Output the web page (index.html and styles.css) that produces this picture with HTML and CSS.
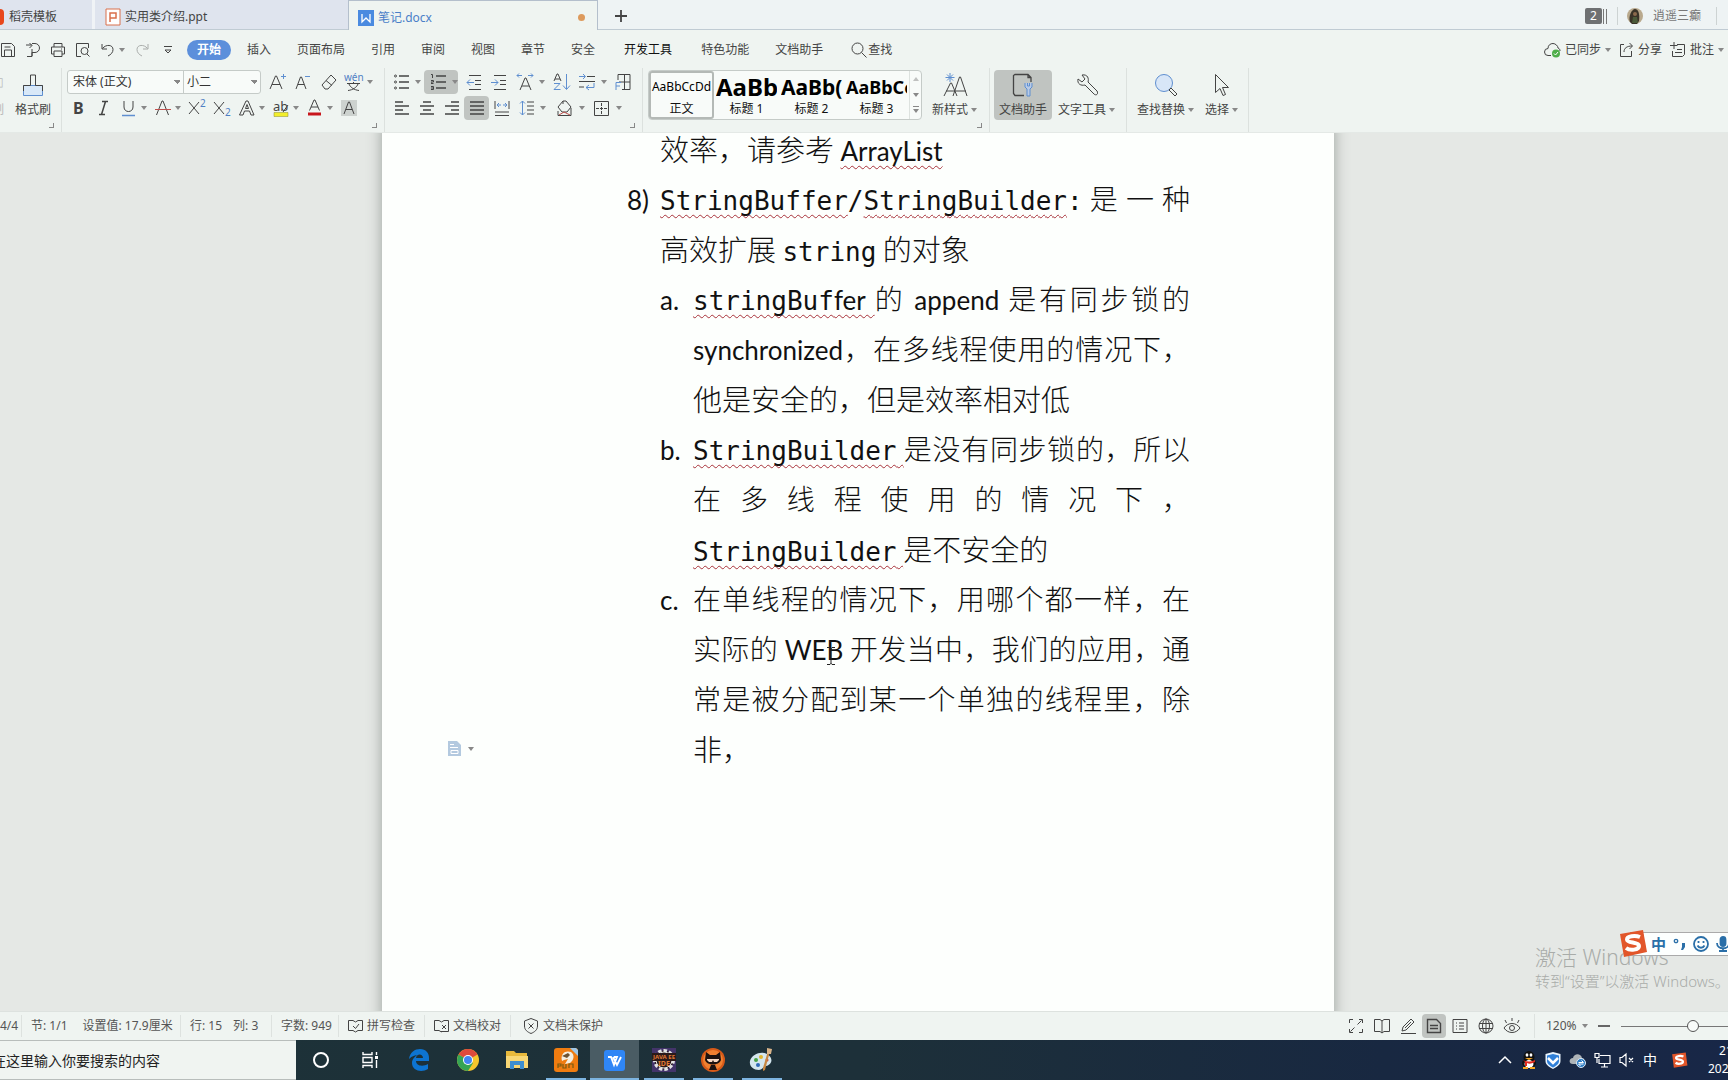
FILE: index.html
```html
<!DOCTYPE html>
<html lang="zh-CN">
<head>
<meta charset="utf-8">
<title>笔记.docx</title>
<link rel="stylesheet" href="styles.css">
</head>
<body>
<header class="titlebar">
  <div class="tab tab-home"><span class="flame"></span><span>稻壳模板</span></div>
  <div class="tab tab-ppt">
    <svg width="16" height="18" viewBox="0 0 16 18" fill="none" stroke="#d9704c"><path d="M1 1h14v16H1z" fill="#fff"/><path d="M5 14V5h6v5H5" stroke-width="1.500"/></svg>
    <span>实用类介绍.ppt</span>
  </div>
  <div class="tab tab-active">
    <svg width="16" height="18" viewBox="0 0 16 18"><path d="M0 1h16v16H0z" fill="#4a8ae0"/><path d="M4 5v8l4-4 4 4V5" fill="none" stroke="#fff" stroke-width="1.300"/></svg>
    <span>笔记.docx</span><i class="dot"></i>
  </div>
  <button class="newtab" aria-label="新建标签"><svg width="12" height="12" viewBox="0 0 12 12" stroke="#444" stroke-width="1.800"><path d="M6 0v12M0 6h12"/></svg></button>
  <div class="account">
    <span class="badge">2</span><i class="bars"></i><i class="vline"></i>
    <svg width="16" height="16" viewBox="0 0 16 16"><circle cx="8" cy="8" r="8" fill="#b9a98d"/><path d="M3 14C1 8 5 1 8 1s5 4 4 12l-2 3H5z" fill="#3a3328"/><circle cx="8" cy="6" r="2" fill="#8b6a4c"/><path d="M6 9h4l1 6H5z" fill="#4b5a3a"/></svg>
    <span class="user">逍遥三癫</span><i class="vline"></i>
  </div>
</header>

<nav class="menubar">
  <div class="quick">
    <button aria-label="保存"><svg width="16" height="16" viewBox="0 0 16 16"><path d="M1.500 1.500h10l3 3v10h-13zM4.500 14V8h7v6M4.500 5h6"/></svg></button>
    <button aria-label="输出"><svg width="16" height="16" viewBox="0 0 16 16"><path d="M1 3h6M4.500 1L7 3.500 4.500 6M7 1.500h3a4 4 0 010 9H7V14M2 14.500h5V7"/></svg></button>
    <button aria-label="打印"><svg width="16" height="16" viewBox="0 0 16 16"><path d="M4 5V1.500h8V5M4 12H1.500V5h13v7H12M4 9h8v5.500H4zM11 7h1"/></svg></button>
    <button aria-label="打印预览"><svg width="16" height="16" viewBox="0 0 16 16"><path d="M6 14.500H1.500v-13h12V6M14.500 14.500L12 12"/><circle cx="9.500" cy="9" r="3.500"/></svg></button>
    <button class="undo" aria-label="撤销"><svg width="14" height="16" viewBox="0 0 14 16"><path d="M1 2v5h5M1.500 6.500C5 2 12 2.500 12 7.500c0 3-2 5-5 6.500"/></svg><i class="caret"></i></button>
    <button aria-label="恢复" class="faint"><svg width="14" height="16" viewBox="0 0 14 16"><path d="M13 2v5H8M12.500 6.500C9 2 2 2.500 2 7.500c0 3 2 5 5 6.500"/></svg></button>
    <button aria-label="更多"><svg width="8" height="16" viewBox="0 0 8 16"><path d="M0 4.500h8M1 8l3 3 3-3z"/></svg></button>
  </div>
  <button class="pill">开始</button>
  <div class="menus">
    <button>插入</button><button>页面布局</button><button>引用</button><button>审阅</button><button>视图</button><button>章节</button><button>安全</button><button class="strong">开发工具</button><button>特色功能</button><button>文档助手</button>
    <button class="find"><svg width="16" height="16" viewBox="0 0 16 16"><circle cx="6.500" cy="6.500" r="5.500"/><path d="M10.500 10.500l5 5"/></svg>查找</button>
  </div>
  <div class="share">
    <button><svg width="17" height="16" viewBox="0 0 17 16"><path d="M7 13.500H4a3.500 3.500 0 010-7C4 3 6.500 1.500 9 1.500S14 4 14 6c1.500.500 2 1.500 2 3"/><circle cx="12" cy="11.500" r="4" fill="#4fae4a" stroke="none"/><path d="M10 11.500l1.500 1.500 2.500-3" stroke="#fff"/></svg>已同步<i class="caret"></i></button>
    <button><svg width="15" height="16" viewBox="0 0 15 16"><path d="M5 2.500H1.500v12h11V9M5 10c0-4 3-6 8-6M10.500 1L13.500 4l-3 3"/></svg>分享</button>
    <button><svg width="16" height="16" viewBox="0 0 16 16"><path d="M7 2.500h7.500v10l-2 2H2.500V9M4 0v7M0 3.500h7.500M7 7.500h5M5 10.500h7"/></svg>批注<i class="caret"></i></button>
  </div>
</nav>

<section class="ribbon">
  <div class="group g-brush">
    <div class="clipped"><span>▯</span><span>制</span></div>
    <button class="big"><svg width="22" height="24" viewBox="0 0 22 24"><path d="M1.500 12.500h19v10h-19z" fill="#d8e8f8" stroke="#5f8fd0"/><path d="M1.500 18v-5.500h7V2h5v10.500h7V18"/></svg><span>格式刷</span></button>
    <i class="corner"></i>
  </div>
  <div class="group g-font">
    <div class="row">
      <div class="combo">
        <select class="face" aria-label="字体"><option>宋体 (正文)</option></select>
        <select class="size" aria-label="字号"><option>小二</option></select>
      </div>
      <button class="tool" aria-label="增大字号"><svg width="18" height="18" viewBox="0 0 18 18"><path d="M1 16L6.500 3h1L13 16M3 11.500h8"/><path d="M12 3.500h5M14.500 1v5" class="b"/></svg></button>
      <button class="tool" aria-label="减小字号"><svg width="18" height="18" viewBox="0 0 18 18"><path d="M2 16L6.500 4h1L12 16M4 11.500h6"/><path d="M11 3.500h5" class="b"/></svg></button>
      <button class="tool" aria-label="清除格式"><svg width="18" height="18" viewBox="0 0 18 18"><path d="M12 2l5 5-8 9H6L3 12zM7 7.500l6 5"/></svg></button>
      <button class="tool drop" aria-label="拼音指南"><svg width="20" height="18" viewBox="0 0 20 18"><text x="0" y="8" class="t blue" font-size="10">wén</text><path d="M3 10.500h13M9.500 9v2M5 11c1 3 5 6 10 6.500M14 11c-1 3-5 6-10 6.500"/></svg><i class="caret"></i></button>
    </div>
    <div class="row row-format">
      <button class="tool" aria-label="加粗"><b>B</b></button>
      <button class="tool" aria-label="倾斜"><svg width="18" height="18" viewBox="0 0 18 18"><path d="M7 2.500h6M4 15.500h6M10.500 2.500l-4 13" stroke-width="1.500"/></svg></button>
      <button class="tool drop" aria-label="下划线"><svg width="18" height="18" viewBox="0 0 18 18"><path d="M4 2v6c0 6 9 6 9 0V2"/><path d="M2 16.500h13" class="b" stroke-width="1.500"/></svg><i class="caret"></i></button>
      <button class="tool drop" aria-label="删除线"><svg width="18" height="18" viewBox="0 0 18 18"><path d="M2.500 16L8 2h1l5.500 14"/><path d="M1 10.500h16" stroke="#c0504d"/></svg><i class="caret"></i></button>
      <button class="tool" aria-label="上标"><svg width="18" height="18" viewBox="0 0 18 18"><path d="M1 3l10 12M11 3L1 15"/><text x="12" y="8" class="t blue" font-size="10">2</text></svg></button>
      <button class="tool" aria-label="下标"><svg width="18" height="18" viewBox="0 0 18 18"><path d="M1 3l10 12M11 3L1 15"/><text x="12" y="17" class="t blue" font-size="10">2</text></svg></button>
      <button class="tool drop" aria-label="文字效果"><svg width="18" height="18" viewBox="0 0 18 18"><path d="M1.500 16L8 2h2l6 14h-3l-1.500-4h-5L5 16zM7.500 9.500h3L9 5.500z"/></svg><i class="caret"></i></button>
      <button class="tool drop" aria-label="突出显示"><svg width="18" height="18" viewBox="0 0 18 18"><path d="M2 13.500h14v4H2z" fill="#f2ee2c" stroke="#8a8a30" stroke-width=".5"/><text x="1" y="12" class="t" font-size="13">ab</text><path d="M11 13l5-7"/></svg><i class="caret"></i></button>
      <button class="tool drop" aria-label="字体颜色"><svg width="18" height="18" viewBox="0 0 18 18"><path d="M3.500 11.500L8 1h1l4.500 10.500M5 8h7"/><path d="M2 13.500h13v3H2z" fill="#c8161c" stroke="none"/></svg><i class="caret"></i></button>
      <button class="tool" aria-label="字符底纹"><svg width="18" height="18" viewBox="0 0 18 18"><path d="M1 1h16v16H1z" fill="#cdd2cf" stroke="none"/><path d="M4 15L8.500 3h1L14 15M6 10.500h6"/></svg></button>
    </div>
    <i class="corner"></i>
  </div>
  <div class="group g-para">
    <div class="row">
      <button class="tool drop" aria-label="项目符号"><svg width="16" height="18" viewBox="0 0 16 18"><path d="M5 3h10M5 9h10M5 15h10" stroke-width="1.400"/><circle cx="1.500" cy="3" r="1"/><circle cx="1.500" cy="9" r="1"/><circle cx="1.500" cy="15" r="1"/></svg><i class="caret"></i></button>
      <button class="tool drop on" aria-label="编号"><svg width="16" height="18" viewBox="0 0 16 18"><path d="M5 3h10M5 9h10M5 15h10" stroke-width="1.500"/><path d="M0 1.500h1.500V5M0 7.500h2.500V9H0v1.500h2.500M0 13.500h2.500v3H0M0 15h2"/></svg><i class="caret"></i></button>
      <button class="tool" aria-label="减少缩进"><svg width="16" height="18" viewBox="0 0 16 18"><path d="M3 2.500h12M9 7.500h6M9 11.500h6M3 16.500h12"/><path d="M8 9.500H1M4 6.500l-3 3 3 3" class="b"/></svg></button>
      <button class="tool" aria-label="增加缩进"><svg width="16" height="18" viewBox="0 0 16 18"><path d="M3 2.500h12M9 7.500h6M9 11.500h6M3 16.500h12"/><path d="M0 9.500h7M4 6.500l3 3-3 3" class="b"/></svg></button>
      <button class="tool drop" aria-label="字符缩放"><svg width="18" height="18" viewBox="0 0 18 18"><path d="M4 17L9 5h1l5 12M6 13h7"/><path d="M6 2.500H1M3 .500l-2 2 2 2M12 2.500h5M15 .500l2 2-2 2" class="b"/></svg><i class="caret"></i></button>
      <button class="tool" aria-label="排序"><svg width="18" height="18" viewBox="0 0 18 18"><path d="M1 8l3-7h1l3 7M2 6h5"/><path d="M1 10.500h6L1 16.500h6.500M13.500 1v15M10 12.500l3.500 4 3.500-4" class="b"/></svg></button>
      <button class="tool drop" aria-label="制表位"><svg width="18" height="18" viewBox="0 0 18 18"><path d="M9 3.500h8M1 8.500h16M1 14h5"/><path d="M1 3.500h6M5 1l2.500 2.500L5 6M16 10v4.500H8M11 12l-3 2.500 3 2.500" class="b"/></svg><i class="caret"></i></button>
      <button class="tool" aria-label="表格"><svg width="16" height="18" viewBox="0 0 16 18"><path d="M3 7V1.500h12v15H7M9.500 1.500v15M4 9h11"/><path d="M1 17V9.500h5M1 13h4" class="b"/></svg></button>
    </div>
    <div class="row">
      <button class="tool" aria-label="左对齐"><svg width="16" height="18" viewBox="0 0 16 18"><path d="M1 3h8M1 7h14M1 11h8M1 15h14" stroke-width="1.300"/></svg></button>
      <button class="tool" aria-label="居中"><svg width="16" height="18" viewBox="0 0 16 18"><path d="M4 3h8M1 7h14M4 11h8M1 15h14" stroke-width="1.300"/></svg></button>
      <button class="tool" aria-label="右对齐"><svg width="16" height="18" viewBox="0 0 16 18"><path d="M7 3h8M1 7h14M7 11h8M1 15h14" stroke-width="1.300"/></svg></button>
      <button class="tool on" aria-label="两端对齐"><svg width="16" height="18" viewBox="0 0 16 18"><path d="M1 3h14M1 7h14M1 11h14M1 15h14" stroke-width="1.500"/></svg></button>
      <button class="tool" aria-label="分散对齐"><svg width="16" height="18" viewBox="0 0 16 18"><path d="M1 2v8M15 2v8M1 13h14M1 16.500h14"/><path d="M3 6h4M5 4L3 6l2 2M13 6H9M11 4l2 2-2 2" class="b"/></svg></button>
      <button class="tool drop" aria-label="行距"><svg width="16" height="18" viewBox="0 0 16 18"><path d="M8 3h7M8 7h7M8 11h7M8 15h7"/><path d="M3.500 2v14M1 4.500L3.500 2 6 4.500M1 13.500L3.500 16 6 13.500" class="b"/></svg><i class="caret"></i></button>
      <button class="tool drop" aria-label="底纹颜色"><svg width="18" height="18" viewBox="0 0 18 18"><path d="M7 2h3l5 6-4 5H6L2 8zM7 2v3M2 12v4.500h13V9"/><path d="M3 16l5-3 6 3" stroke="#c0504d"/></svg><i class="caret"></i></button>
      <button class="tool drop" aria-label="边框"><svg width="18" height="18" viewBox="0 0 18 18"><path d="M1.500 2.500h14v14h-14z"/><path d="M8.500 4v11M3 9.500h11" stroke-dasharray="3 1"/></svg><i class="caret"></i></button>
    </div>
    <i class="corner"></i>
  </div>
  <div class="group g-style">
    <div class="gallery">
      <button class="style sel"><span class="s0">AaBbCcDd</span><em>正文</em></button>
      <button class="style"><span class="s1">AaBb</span><em>标题 1</em></button>
      <button class="style"><span class="s2">AaBb(</span><em>标题 2</em></button>
      <button class="style"><span class="s3">AaBbCc</span><em>标题 3</em></button>
      <div class="spin"><i class="caret up"></i><i class="caret"></i><i class="caret more"></i></div>
    </div>
    <button class="big"><svg width="26" height="24" viewBox="0 0 26 24"><path d="M2 23L8.500 10h1L15 23M4 18h20M11 23L17.500 4h1L25 23"/><path d="M8 0v9M3.500 4.500h9M5 1.500l6 6M11 1.500l-6 6" class="b"/></svg><span>新样式<i class="caret"></i></span></button>
    <i class="corner"></i>
  </div>
  <div class="group g-help">
    <button class="big on"><svg width="22" height="24" viewBox="0 0 22 24"><path d="M12 22.500H3l-1.500-2v-18L3 1.500h13l3 3V9M16 1.500v3h3" stroke-width="1.300"/><path d="M13 10v4l2 2v7h3v-7l2-2v-4M15.500 10v3h2v-3" stroke="#5f8fd0" fill="#b9cbe6"/></svg><span>文档助手</span></button>
    <button class="big"><svg width="22" height="24" viewBox="0 0 22 24"><path d="M6 2c6-1 7 4 6 7l9 9c2 3-1 5-3 3L9 12c-4 1-8-1-7-6l4 3 3-3z"/></svg><span>文字工具<i class="caret"></i></span></button>
  </div>
  <div class="group g-edit">
    <button class="big"><svg width="24" height="24" viewBox="0 0 24 24"><circle cx="10" cy="10" r="8.500" fill="#d8e6f7" stroke="#5f8fd0"/><path d="M15 17l2-2 6 6-2 2z"/></svg><span>查找替换<i class="caret"></i></span></button>
    <button class="big"><svg width="22" height="24" viewBox="0 0 22 24"><path d="M4.500 1.500v18l4.500-4 3 7 2.500-1-3-7h6z"/></svg><span>选择<i class="caret"></i></span></button>
  </div>
</section>

<main class="canvas">
  <article class="page">
    <p class="line l1">效率，请参考 <u class="cal">ArrayList</u></p>
    <p class="line l1 full"><span class="num">8)</span><u class="mono">StringBuffer</u><span class="mono">/</span><u class="mono">StringBuilder</u><span class="mono">:</span> 是 一 种</p>
    <p class="line l1">高效扩展 <span class="mono">string</span> 的对象</p>
    <p class="line l2 full"><span class="num">a.</span><u class="mono">stringBuf<span class="cal">fer </span></u>的 <span class="cal">append</span> 是有同步锁的</p>
    <p class="line l2 full"><span class="cal">synchronized</span>，在多线程使用的情况下，</p>
    <p class="line l2">他是安全的，但是效率相对低</p>
    <p class="line l2 full"><span class="num">b.</span><u class="mono">StringBuilder<span class="cal"> </span></u>是没有同步锁的，所以</p>
    <p class="line l2 full">在多线程使用的情况下，</p>
    <p class="line l2"><u class="mono">StringBuilder<span class="cal"> </span></u>是不安全的</p>
    <p class="line l2 full"><span class="num">c.</span>在单线程的情况下，用哪个都一样，在</p>
    <p class="line l2 full">实际的 <span class="cal web">WEB<svg class="ibeam" width="8" height="18" viewBox="0 0 8 18" fill="none" stroke="#222"><path d="M0 .500h3l1 1 1-1h3M4 1v16M0 17.500h3l1-1 1 1h3"/></svg></span> 开发当中，我们的应用，通</p>
    <p class="line l2 full">常是被分配到某一个单独的线程里，除</p>
    <p class="line l2">非，</p>
    <div class="marker"><svg width="13" height="15" viewBox="0 0 13 15"><path d="M0 0h9l4 4v11H0z" fill="#b3c9df"/><path d="M2 3.500h4M2 6.500h8M3 9.500h7v3H3z" stroke="#fff" fill="none"/></svg><i class="caret"></i></div>
  </article>
  <div class="watermark"><strong>激活 Windows</strong><span>转到“设置”以激活 Windows。</span></div>
  <div class="ime">
    <svg class="sogou" width="30" height="30" viewBox="0 0 30 30"><path d="M2 5L25 1l4 22-23 5z" fill="#e2562a"/><path d="M22 8c-5-2-13-1-13 2.500 0 4 12 2 12 6.500 0 4-9 5-13 2" fill="none" stroke="#fff" stroke-width="4"/></svg>
    <b>中</b>
    <svg width="13" height="14" viewBox="0 0 13 14"><circle cx="3" cy="4" r="1.700" fill="none" stroke="#2a6fa8" stroke-width="1.300"/><path d="M9 6h3v4l-2 3H8l1-3z" fill="#2a6fa8"/></svg>
    <svg width="16" height="16" viewBox="0 0 16 16" fill="none" stroke="#2a6fa8" stroke-width="1.800"><circle cx="8" cy="8" r="7"/><path d="M5.500 5v2M10.500 5v2M4.500 9.500c1.500 3 5.500 3 7 0"/></svg>
    <svg width="14" height="16" viewBox="0 0 14 16" fill="none" stroke="#2a6fa8" stroke-width="1.800"><path d="M1 7c0 7 12 7 12 0M7 12v4M3 15h8"/><rect x="4.500" y="1" width="5" height="9" rx="2.500" fill="#2a6fa8"/></svg>
  </div>
</main>

<footer class="status">
  <div class="cell c-page"><span>4/4</span></div>
  <div class="cell c-sec"><span>节: 1/1</span><span>设置值: 17.9厘米</span></div>
  <div class="cell c-row"><span>行: 15</span><span>列: 3</span></div>
  <div class="cell c-count"><span>字数: 949</span></div>
  <div class="cell"><button><svg width="15" height="14" viewBox="0 0 15 14"><path d="M5 1.500H.500v10H5l2.500 1.500 2.500-1.500h4.500v-10H10M5 1.500L7.500 3 10 1.500M5 7l2.500 2.500L11 5"/></svg>拼写检查</button></div>
  <div class="cell"><button><svg width="15" height="14" viewBox="0 0 15 14"><path d="M5 1.500H.500v10H5l2.500 1.500M5 1.500L7.500 3 10 1.500h4.500v11H7M8 6l4 4M12 6L8 10"/></svg>文档校对</button></div>
  <div class="cell last"><button><svg width="16" height="16" viewBox="0 0 16 16"><path d="M8 .500l6.500 2.500v5c0 4-3 6-6.500 7.500C4.500 14 1.500 12 1.500 8V3zM5.500 5.500l5 5M10.500 5.500l-5 5"/></svg>文档未保护</button></div>
  <div class="views">
    <button aria-label="全屏"><svg width="16" height="16" viewBox="0 0 16 16"><path d="M1.500 5V1.500H5M11 1.500h3.500V5M14.500 11v3.500H11M5 14.500H1.500V11M9.500 6.500l4-4M2.500 13.500l4-4"/></svg></button>
    <button aria-label="阅读"><svg width="16" height="16" viewBox="0 0 16 16"><path d="M8 3L6 1.500H.500v12H6L8 15l2-1.500h5.500v-12H10zv12"/></svg></button>
    <button aria-label="写作"><svg width="16" height="16" viewBox="0 0 16 16"><path d="M1 15.500h15M2 13l1-4 8-8 3 3-8 8zM5 10l6-6"/></svg></button>
    <button aria-label="页面视图" class="on"><svg width="16" height="16" viewBox="0 0 16 16"><path d="M1.500 1.500h9l4 4v9h-13zM4 7.500h8M4 10.500h8" stroke-width="1.400"/></svg></button>
    <button aria-label="大纲"><svg width="16" height="16" viewBox="0 0 16 16"><path d="M1 1.500h14v13H1zM4 5h1M7 5h5M4 8h1M7 8h5M7 11h5M4 11h1"/></svg></button>
    <button aria-label="网页视图"><svg width="16" height="16" viewBox="0 0 16 16"><circle cx="8" cy="8" r="7"/><ellipse cx="8" cy="8" rx="3.500" ry="7"/><path d="M1 5.500h14M1 10.500h14M8 1v14"/></svg></button>
    <button aria-label="护眼"><svg width="18" height="16" viewBox="0 0 18 16"><path d="M1 10c4-6 12-6 16 0-4 6-12 6-16 0zM9 3V0M3.500 5L2 2M14.500 5L16 2"/><circle cx="9" cy="10" r="2.500"/></svg></button>
  </div>
  <div class="zoom">
    <button class="pct">120%<i class="caret"></i></button>
    <button class="minus" aria-label="缩小"></button>
    <input type="range" min="0" max="172" value="120" aria-label="显示比例">
  </div>
</footer>

<footer class="taskbar">
  <input class="search" placeholder="在这里输入你要搜索的内容" aria-label="搜索">
  <div class="apps">
    <button aria-label="Cortana"><svg width="18" height="18" viewBox="0 0 18 18"><circle cx="9" cy="9" r="7" fill="none" stroke="#fff" stroke-width="2"/></svg></button>
    <button aria-label="任务视图"><svg width="18" height="18" viewBox="0 0 18 18" fill="none" stroke="#fff" stroke-width="1.400"><path d="M2 1v2.500h9V1M2 6.500h9v5H2zM2 17v-2.500h9V17M15.500 1v3M15.500 9v8"/><path d="M14 5h3v3h-3z" fill="#fff" stroke="none"/></svg></button>
    <button aria-label="Edge"><svg width="22" height="22" viewBox="0 0 22 22"><path d="M1 10C2 3 7 0 12 0c6 0 9 4 9 9v3H8c0 5 7 6 12 3v5c-6 4-16 2-16-6 0-4 3-7 6-8-3 0-6 1-9 4zm7-1h7c0-4-6-5-7 0z" fill="#0d74d1"/></svg></button>
    <button aria-label="Chrome"><svg width="22" height="22" viewBox="0 0 22 22"><circle cx="11" cy="11" r="11" fill="#f6c52c"/><path d="M11 11L1.500 5.500a11 11 0 0119 0z" fill="#de4a3c"/><path d="M11 11L1.500 5.500A11 11 0 0011 22l5-8z" fill="#35a455"/><circle cx="11" cy="11" r="5" fill="#fff"/><circle cx="11" cy="11" r="4" fill="#4285f4"/></svg></button>
    <button aria-label="文件资源管理器"><svg width="22" height="20" viewBox="0 0 22 20"><path d="M0 1h8l2 2h11v15H0z" fill="#e8b93c"/><path d="M0 6h22v12H0z" fill="#f8d775"/><path d="M4 19v-8h14v8h-4v-4H8v4z" fill="#3d8ed0"/></svg></button>
    <button class="run" aria-label="笔记工具"><svg width="24" height="24" viewBox="0 0 24 24"><rect width="24" height="24" rx="3" fill="#f07c10"/><path d="M16 0h6l2 2v6z" fill="#9fc7e6"/><path d="M8 13C6 5 12 2 17 4c4 3 3 8-1 11l-5 1 3-5-4 1z" fill="#f4eee0"/><path d="M8 8l6-3 2 2-3 3z" fill="#6d5232"/><path d="M4 20v-4h3v2H4M9 16v4h3v-4M15 20v-4h4v4" stroke="#7a5a10" stroke-width="1.200" fill="none"/></svg></button>
    <button class="run current" aria-label="WPS"><svg width="21" height="21" viewBox="0 0 21 21"><rect width="21" height="21" rx="3" fill="#2f86f6"/><path d="M4 7h3l3 8 3-8h-3M9 7l4 8 4-8" fill="none" stroke="#fff" stroke-width="1.800"/></svg></button>
    <button class="run" aria-label="Java EE IDE"><svg width="24" height="24" viewBox="0 0 24 24"><path d="M0 0h24v24H0z" fill="#43346a"/><circle cx="12" cy="12" r="9.500" fill="#2b1a1a" stroke="#e4e4e4" stroke-width="3" stroke-dasharray="3.500 2"/><circle cx="12" cy="12" r="8" fill="#2b1a1a" stroke="#e4e4e4"/><path d="M0 5h24v8H0z" fill="#2b1a1a"/><text x="12" y="11" text-anchor="middle" font-size="6" font-weight="700" fill="#e07a34">JAVA EE</text><text x="12" y="18" text-anchor="middle" font-size="7" font-weight="700" fill="#e07a34">IDE</text></svg></button>
    <button class="run" aria-label="黑猫"><svg width="24" height="24" viewBox="0 0 24 24"><circle cx="12" cy="12" r="12" fill="#d85a18"/><circle cx="12" cy="12" r="10" fill="#f08030"/><path d="M5 4l4 3h6l4-3 1 8c-2 6-14 6-16 0zM10 17h4l2 5H8z" fill="#1c1210"/><path d="M6 11h12v1l-2 2h-3l-1-2-1 2H8l-2-2z" fill="#f6d9c4"/></svg></button>
    <button class="run" aria-label="画图"><svg width="26" height="24" viewBox="0 0 26 24"><path d="M1 13C3 6 12 3 18 6c7 4 5 11-1 12-3 0-3 4-7 4-6 0-10-4-9-9z" fill="#d4e6ee"/><circle cx="7" cy="12" r="2" fill="#47a244"/><circle cx="12" cy="9" r="2" fill="#e0b62e"/><circle cx="9" cy="17" r="2" fill="#2f69b8"/><circle cx="18" cy="12" r="1.500" fill="#d23c30"/><path d="M21 3l-5 19-2 1 0-3 5-17z" fill="#c68642"/><path d="M18 0l5 1-1 5h-4z" fill="#d9b48a"/></svg></button>
  </div>
  <div class="tray">
    <svg width="16" height="16" viewBox="0 0 16 16" fill="none" stroke="#fff" stroke-width="1.500"><path d="M2 11l6-6 6 6"/></svg>
    <svg width="16" height="18" viewBox="0 0 16 18"><ellipse cx="8" cy="6" rx="5.500" ry="6" fill="#111"/><ellipse cx="8" cy="12" rx="7" ry="5" fill="#111"/><ellipse cx="8" cy="13" rx="4.500" ry="4" fill="#fff"/><ellipse cx="6" cy="4" rx="1.400" ry="1.800" fill="#fff"/><ellipse cx="10" cy="4" rx="1.400" ry="1.800" fill="#fff"/><path d="M4 7h8l-4 2z" fill="#f5a623"/><path d="M2 9c4 2 8 2 12 0v2c-4 2-6 2-8 1v3H4v-4z" fill="#e22b20"/><path d="M2 16h5v2H2zM9 16h5v2H9z" fill="#f5a623"/></svg>
    <svg width="16" height="17" viewBox="0 0 16 17"><path d="M8 0l7.500 2v7c0 4-4 6-7.500 8C4.500 15 .500 13 .500 9V2z" fill="#e9f3fc"/><path d="M8 2l6 1.500V9c0 3-3 5-6 6.500C5 14 2 12 2 9V3.500z" fill="#2f7fd8"/><path d="M3 6l5 5 5-5" fill="none" stroke="#fff" stroke-width="2.500"/></svg>
    <svg width="17" height="16" viewBox="0 0 17 16"><path d="M4 12C-1 12 0 6 4 6c1-5 8-5 9 0 3 0 4 6 0 6z" fill="#aeb4b8"/><circle cx="12" cy="11" r="4.500" fill="#2d7cc4" stroke="#dce9f5"/><path d="M9.500 10.500h5l-2-2M14.500 12h-5l2 2" stroke="#fff" fill="none"/></svg>
    <svg width="17" height="16" viewBox="0 0 17 16" fill="none" stroke="#fff" stroke-width="1.200"><path d="M6 3.500h10v8H5V7M10.500 12v3M7 15h7M1 1.500h4v4H1zM3 6v5"/></svg>
    <svg width="16" height="16" viewBox="0 0 16 16" fill="none" stroke="#fff" stroke-width="1.200"><path d="M1 5.500h2l4-3.500v12l-4-3.500H1zM10 6l4 4M14 6l-4 4"/></svg>
    <span class="lang">中</span>
    <svg width="17" height="17" viewBox="0 0 30 30"><path d="M2 4L26 1l3 23-24 4z" fill="#e2562a"/><path d="M22 8c-5-2-13-1-13 2.500 0 4 12 2 12 6.500 0 4-9 5-13 2" fill="none" stroke="#fff" stroke-width="4"/></svg>
  </div>
  <div class="clock"><span class="time">21</span><span>202</span></div>
</footer>
</body>
</html>
```
FILE: styles.css
```css
* { box-sizing: border-box; }
body {
  margin: 0;
  height: 100vh;
  display: flex;
  flex-direction: column;
  overflow: hidden;
  background: #eff4f1;
  color: #444;
  font: 12px/16px "Noto Sans", "Noto Sans CJK SC", sans-serif;
  white-space: nowrap;
}
button {
  margin: 0;
  padding: 0;
  border: 0;
  background: none;
  color: inherit;
  font: inherit;
  display: flex;
  align-items: center;
}
svg { flex: none; display: block; }
i { flex: none; display: block; }
.menubar svg, .ribbon svg, .status svg { fill: none; stroke: #444; }
.ribbon .b { stroke: #5f8fd0; }
.ribbon .t { fill: #444; stroke: none; }
.ribbon .t.blue { fill: #4f80c4; }
.caret {
  border: 3px solid transparent;
  border-top: 4px solid #888;
  border-bottom: 0;
  width: 6px;
  height: 4px;
}
.on { background: #c0c4c1; border-radius: 4px; }

/* Title bar */
.titlebar {
  height: 30px;
  flex: none;
  display: flex;
  background: #eef3f4;
  border-bottom: 1px solid #c0cbd3;
}
.tab {
  height: 29px;
  display: flex;
  align-items: center;
  gap: 4px;
  padding-top: 4px;
  background: #dfe4ee;
}
.tab-home { width: 95px; gap: 5px; border-right: 3px solid #f0f3f6; }
.flame { width: 4px; height: 16px; background: #e8471c; border-radius: 0 8px 8px 0; }
.tab-ppt { width: 253px; padding-left: 10px; }
.tab-active {
  width: 250px;
  height: 30px;
  padding-left: 9px;
  background: #eff4f1;
  border: 1px solid #b4bfcc;
  border-bottom: 0;
  color: #4a7fc8;
}
.dot { width: 7px; height: 7px; border-radius: 50%; background: #dd9a5c; margin: 0 12px 0 auto; }
.newtab { padding: 3px 17px 0; }
.account { margin-left: auto; display: flex; align-items: center; padding-right: 11px; color: #777; padding-top: 3px; }
.badge { width: 17px; background: #6e7072; color: #fff; text-align: center; border-radius: 2px; }
.bars { width: 4px; height: 15px; border: solid #777; border-width: 0 1px; margin-left: 1px; }
.vline { width: 1px; height: 18px; background: #cdd3d3; margin: 0 9px 0 10px; }
.user { margin-left: 10px; }
.account .vline:last-child { margin: 0 0 0 15px; }

/* Menu bar */
.menubar { height: 38px; flex: none; display: flex; align-items: center; padding-top: 1px; }
.quick { display: flex; align-items: center; gap: 9px; width: 187px; }
.quick .undo { gap: 4px; margin: 0 1px; }
.quick .faint { opacity: .4; margin-right: 6px; }
.pill { width: 44px; height: 20px; border-radius: 10px; background: #5c8fdb; color: #fff; font-weight: 700; justify-content: center; }
.menus { display: flex; gap: 26px; margin-left: 16px; }
.menus .strong { color: #111; margin: 0 3px; }
.find { gap: 1px; margin-left: 2px; }
.share { margin-left: auto; display: flex; gap: 8px; padding-right: 4px; }
.share button { gap: 4px; }

/* Ribbon */
.ribbon { height: 65px; flex: none; display: flex; align-items: stretch; border-bottom: 1px solid #e4e9e6; }
.group { position: relative; display: flex; border-right: 1px solid #dce1de; padding: 2px 0 12px; }
.corner { position: absolute; right: 7px; bottom: 4px; width: 5px; height: 5px; border: solid #888; border-width: 0 1px 1px 0; }
.big { flex-direction: column; justify-content: space-between; padding: 3px 5px 2px; }
.big span { display: flex; align-items: center; gap: 3px; }
.g-brush { width: 62px; }
.clipped { width: 4px; overflow: hidden; direction: rtl; color: #bbb; display: flex; flex-direction: column; justify-content: space-between; padding: 4px 0 2px; }
.g-brush .big { margin-left: 6px; }
.row { display: flex; align-items: center; height: 24px; }
.row + .row { margin-top: 2px; }
.g-font, .g-para { flex-direction: column; }
.g-font { width: 323px; padding-left: 5px; }
.row-format { padding-left: 3px; }
.combo { display: flex; width: 194px; height: 24px; border: 1px solid #c5cbc8; border-radius: 3px; background: #f8fbf9; margin-right: 8px; }
.combo select {
  appearance: none;
  border: 0;
  margin: 0;
  padding: 0 0 0 5px;
  color: #333;
  font: inherit;
  line-height: 22px;
  background: conic-gradient(from -45deg at 50% 100%, #888 90deg, transparent 0) right 3px center / 6px 4px no-repeat;
}
.face { width: 115px; }
.combo .size { width: 77px; border-left: 1px solid #c5cbc8; padding-left: 3px; }
.tool { width: 25px; height: 24px; }
.tool b { font-size: 16px; margin-left: 3px; }
.drop { width: 34px; gap: 3px; }
.g-para { width: 258px; padding-left: 9px; }
.g-para .drop { width: 37px; gap: 5px; }
.g-para .tool.on { margin-left: -5px; padding-left: 5px; width: 25px; margin-right: 5px; }
.g-para .drop.on { margin-left: -7px; padding-left: 7px; width: 34px; margin-right: 8px; }
.g-style { width: 347px; padding-left: 5px; }
.gallery { display: flex; width: 274px; height: 50px; border: 1px solid #c5cbc8; border-radius: 4px; background: #f8fbf9; color: #111; }
.style { width: 65px; flex-direction: column; justify-content: space-between; overflow: hidden; border: 2px solid transparent; }
.style.sel { border-color: #b4b9b6; border-radius: 3px; }
.style span { height: 28px; line-height: 28px; color: #000; }
.style em { font-style: normal; }
.s0 { font-size: 12px; }
.s1, .s2, .s3 { font-weight: 700; align-self: flex-start; }
.s1 { font-size: 24px; }
.s2 { font-size: 21px; }
.s3 { font-size: 18px; }
.spin { margin-left: auto; width: 12px; border-left: 1px solid #dde2df; display: flex; flex-direction: column; align-items: center; justify-content: space-around; }
.up { transform: rotate(180deg); opacity: .5; }
.more { position: relative; }
.more::before { content: ""; position: absolute; left: -3px; top: -7px; width: 6px; height: 1px; background: #888; }
.g-style .big { margin-left: 5px; }
.g-help { width: 137px; padding-left: 4px; gap: 1px; }
.g-edit { width: 122px; padding-left: 5px; gap: 1px; }

/* Document */
.canvas { flex: 1; min-height: 0; position: relative; overflow: hidden; background: #e5e8e5; display: flex; justify-content: center; }
.page {
  position: relative;
  width: 952px;
  margin: -10px 12px 0 0;
  padding: 0 144px 0 278px;
  min-height: 900px;
  background: #fdfffd;
  box-shadow: 0 0 14px #9aa09c;
  color: #111;
  font: 300 29px/50px "Noto Sans CJK SC", sans-serif;
}
.line { margin: 0; height: 50px; position: relative; }
.l2 { margin-left: 33px; }
.full { font-size: 28px; text-align: justify; text-align-last: justify; }
.line .num { position: absolute; left: -33px; font-family: Lato, sans-serif; font-weight: 400; font-size: 26px; line-height: 54px; }
.cal { font-family: Lato, sans-serif; font-weight: 400; font-size: 26px; }
.mono { font-family: "DejaVu Sans Mono", monospace; font-weight: 400; font-size: 26px; }
.line u { text-decoration: underline wavy #a8323a 1px; text-underline-offset: 4px; text-decoration-skip-ink: none; }
.web { position: relative; }
.ibeam { position: absolute; right: 8px; top: 13px; }
.marker { position: absolute; left: 66px; top: 618px; display: flex; align-items: center; gap: 7px; }
.watermark { position: absolute; right: -8px; bottom: 20px; width: 201px; color: #a9aca9; display: flex; flex-direction: column; gap: 1px; font-weight: 300; }
.watermark strong { font-size: 21px; line-height: 26px; font-weight: 300; }
.watermark span { font-size: 15px; line-height: 20px; }
.ime { position: absolute; right: 0; bottom: 55px; width: 98px; height: 24px; background: #fdfffe; border: 1px solid #aaa; border-right: 0; display: flex; align-items: center; gap: 7px; padding-left: 16px; color: #2a6fa8; font-size: 15px; }
.sogou { margin: 0 -4px 0 -29px; }

/* Status bar */
.status { height: 29px; flex: none; display: flex; align-items: center; border-top: 1px solid #dde2df; color: #555; }
.cell { height: 22px; display: flex; align-items: center; padding: 0 9px; border-right: 1px solid #dde2df; }
.cell button { gap: 4px; }
.c-page { width: 22px; padding: 0; }
.c-sec { width: 159px; gap: 15px; }
.c-row { width: 91px; gap: 11px; }
.c-count { width: 67px; }
.status .last { border: 0; padding-left: 12px; }
.views { margin-left: auto; display: flex; align-items: center; gap: 2px; padding-right: 10px; border-right: 1px solid #dde2df; }
.views button { width: 24px; height: 24px; justify-content: center; }
.zoom { display: flex; align-items: center; padding-left: 11px; }
.pct { gap: 5px; width: 52px; }
.minus { width: 12px; height: 2px; background: #666; margin-right: 11px; }
.zoom input { appearance: none; width: 107px; height: 14px; margin: 0; background: linear-gradient(#777, #777) 0 7px / 100% 1px no-repeat; }
.zoom input::-webkit-slider-thumb { appearance: none; width: 12px; height: 12px; border: 1px solid #555; border-radius: 50%; background: #f8fbf9; }

/* Taskbar */
.taskbar { height: 40px; flex: none; display: flex; background: linear-gradient(90deg, #1d3238, #1d3039 50%, #182841 80%, #182747); color: #fff; }
.search { width: 296px; height: 40px; margin: 0; padding: 0; text-indent: -8px; border: solid #b8bdbb; border-width: 1px 0; background: #f0f4f1; font: 14px "Noto Sans CJK SC", sans-serif; }
.search::placeholder { color: #222; }
.apps { display: flex; }
.apps button { width: 49px; justify-content: center; position: relative; }
.run::after { content: ""; position: absolute; left: 5px; right: 4px; bottom: 0; height: 2px; background: #7db4e0; }
.current { background: #4a5c64; }
.current::after { left: 0; right: 0; }
.tray { margin-left: auto; display: flex; align-items: center; gap: 8px; padding-right: 20px; }
.lang { width: 16px; font-size: 14px; margin-right: 4px; }
.clock { width: 20px; overflow: hidden; display: flex; flex-direction: column; justify-content: space-around; padding: 2px 0; }
.time { margin-left: 11px; }
```
